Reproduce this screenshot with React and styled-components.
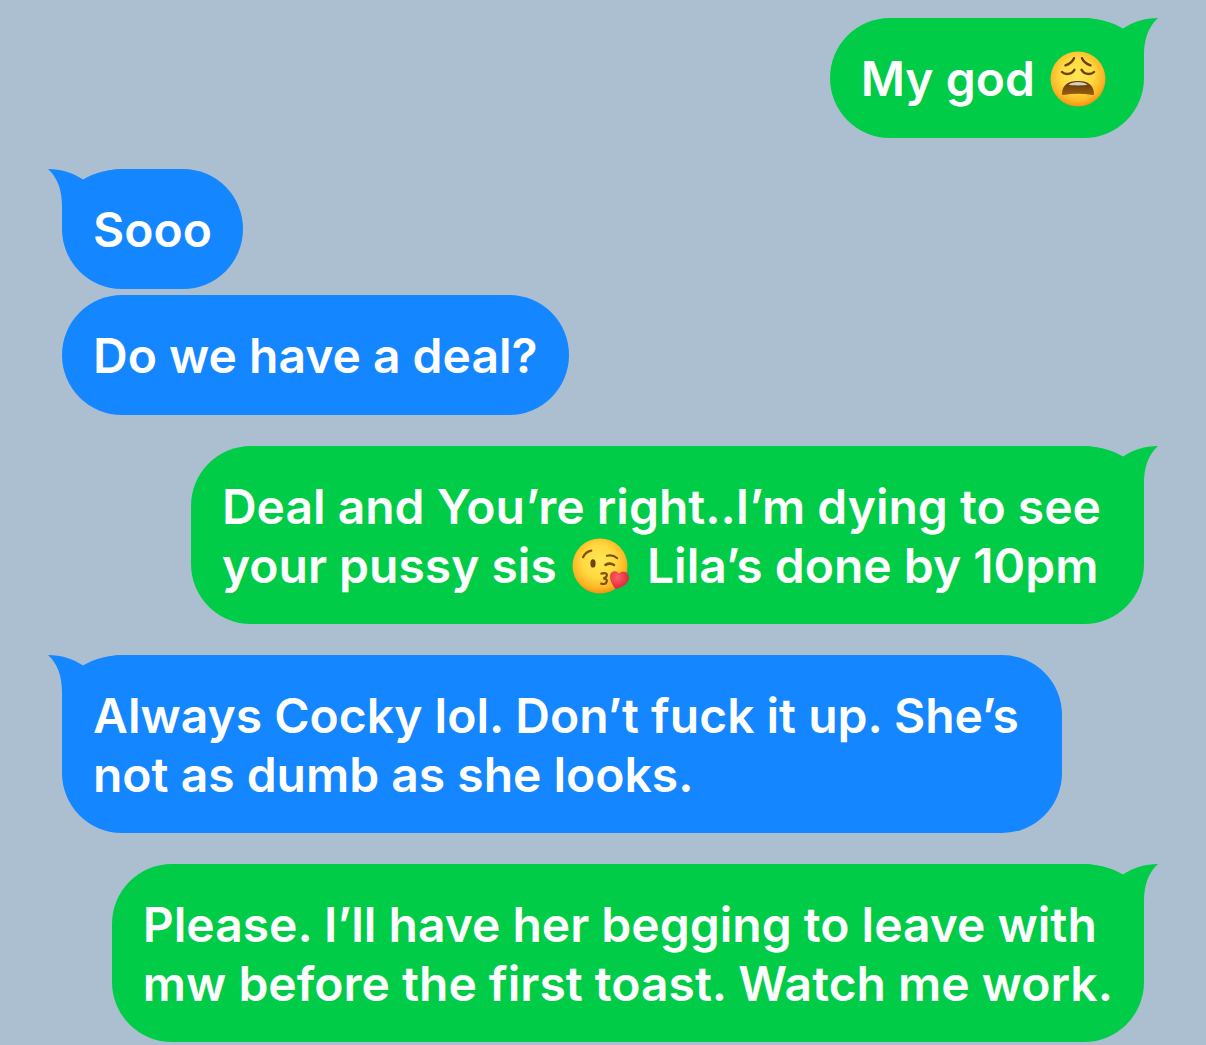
import styled, { createGlobalStyle } from "styled-components";

const GlobalStyle = createGlobalStyle`
  * {
    box-sizing: border-box;
  }

  body {
    margin: 0;
    background-color: #abbfd0;
    font-family: Inter, "Liberation Sans", sans-serif;
  }
`;

const Thread = styled.main`
  display: flex;
  flex-direction: column;
  gap: 31px;
  padding: 18px 62px 3px;
`;

const Group = styled.section`
  display: flex;
  flex-direction: column;
  align-items: ${({ $sent }) => ($sent ? "flex-end" : "flex-start")};
  gap: 6px;
`;

const Bubble = styled.p`
  position: relative;
  max-width: 100%;
  min-height: 120px;
  margin: 0;
  padding: 31px 31px 29px;
  border-radius: 60px;
  background-color: ${({ $sent }) => ($sent ? "#00cc47" : "#1486ff")};
  color: white;
  font-size: 48px;
  font-weight: 600;
  line-height: 59px;
  white-space: break-spaces;
`;

const TailShape = styled.svg`
  position: absolute;
  top: 0;
  width: 80px;
  height: 60px;
  fill: ${({ $sent }) => ($sent ? "#00cc47" : "#1486ff")};
  ${({ $sent }) => ($sent ? "right: -14px;" : "left: -14px; transform: scaleX(-1);")}
`;

// Relative so the wording stays above the tail, which reaches into the corner.
const Line = styled.span`
  display: block;
  position: relative;
`;

const Emoji = styled.svg`
  width: 58px;
  height: 58px;
  margin: 0 6px 0 2px;
  vertical-align: -12px;
`;

const Tail = ({ $sent }) => (
  <TailShape $sent={$sent} viewBox="0 0 80 60" aria-hidden="true">
    <path d="M0 0 C20 0 34 4 45 10.5 C55 4 67 0 80 0 C70 9 66 22 66 37 V60 H0 Z" />
  </TailShape>
);

const WearyFace = () => (
  <Emoji viewBox="0 0 58 58" role="img" aria-label="weary face">
    <defs>
      <radialGradient id="weary" cx="48%" cy="42%" r="60%">
        <stop offset="0" stopColor="#ffe655" />
        <stop offset="0.5" stopColor="#ffd93f" />
        <stop offset="0.8" stopColor="#fdb726" />
        <stop offset="1" stopColor="#f08c10" />
      </radialGradient>
      <linearGradient id="wearyMouth" x1="0" y1="0" x2="0" y2="1">
        <stop offset="0" stopColor="#5c3306" />
        <stop offset="1" stopColor="#9a600f" />
      </linearGradient>
    </defs>
    <circle cx="29" cy="29" r="27.5" fill="url(#weary)" />
    <g fill="none" stroke="#6b3f08" strokeWidth="2.4" strokeLinecap="round">
      <path d="M16.5 15.3 C20.5 14 23.6 11.6 25 8.2" />
      <path d="M33 8.2 C34.4 11.6 37.5 14 41.5 15.3" />
      <path d="M13 22 C16 25 23 24.8 25.5 19.8" />
      <path d="M32.5 19.8 C35 24.8 42 25 45 22" />
    </g>
    <path
      d="M13 43.4 C13.4 35.4 18.5 31 29 31 C39.5 31 44.6 35.4 45 43.4 C45 44.8 44.3 45.2 43.2 44.9 C34 43.4 24 43.4 14.8 44.9 C13.7 45.2 13 44.8 13 43.4 Z"
      fill="url(#wearyMouth)"
    />
    <path
      d="M19.4 34.8 C24 31 34 31 38.6 34.8 C36 35.6 22 35.6 19.4 34.8 Z"
      fill="#d8cdca"
    />
  </Emoji>
);

const KissFace = () => (
  <Emoji viewBox="0 0 58 58" role="img" aria-label="face blowing a kiss">
    <defs>
      <radialGradient id="kiss" cx="48%" cy="42%" r="60%">
        <stop offset="0" stopColor="#ffe655" />
        <stop offset="0.5" stopColor="#ffd93f" />
        <stop offset="0.8" stopColor="#fdb726" />
        <stop offset="1" stopColor="#f08c10" />
      </radialGradient>
      <radialGradient id="kissHeart" cx="38%" cy="35%" r="70%">
        <stop offset="0" stopColor="#ff6064" />
        <stop offset="1" stopColor="#dd2036" />
      </radialGradient>
    </defs>
    <circle cx="29" cy="29" r="27.5" fill="url(#kiss)" />
    <g fill="none" stroke="#80500f" strokeWidth="2.2" strokeLinecap="round">
      <path d="M12 20.3 C13.8 16.4 16.5 14.2 20.3 13.6" />
      <path d="M36 18.8 C39.5 18 43.5 18.8 46.2 21.2" />
      <path d="M34.5 27.9 C37.4 26.3 40.4 26.3 43 28" strokeWidth="2.6" />
      <path d="M30.4 36.6 C33.8 35.4 36.2 36.2 35.8 38.6 C35.4 40.4 33.8 41.2 32.2 41.4 C34.4 41.5 36.1 42.4 35.8 44.2 C35.4 46.6 33 47.6 30.2 46.6" />
    </g>
    <ellipse cx="22" cy="26.4" rx="2.6" ry="4.2" fill="#704207" />
    <path
      d="M44.6 52 C41.4 48 38.8 43.8 39 39.2 C39.2 34 45 32.6 48 36.4 C51.4 33.2 57.6 35 57.9 40.2 C58 45.6 52.4 50.6 44.6 52 Z"
      fill="url(#kissHeart)"
    />
  </Emoji>
);

const Message = ({ sent, tail, children }) => (
  <Bubble $sent={sent}>
    {tail && <Tail $sent={sent} />}
    {children}
  </Bubble>
);

const App = () => {
  return (
    <>
      <GlobalStyle />
      <Thread>
        <Group $sent>
          <Message sent tail>
            <Line>
              My god <WearyFace />
            </Line>
          </Message>
        </Group>

        <Group>
          <Message tail>
            <Line>Sooo</Line>
          </Message>
          <Message>
            <Line>Do we have a deal?</Line>
          </Message>
        </Group>

        <Group $sent>
          <Message sent tail>
            <Line>{"Deal and You’re right..I’m dying to see "}</Line>
            <Line>
              your pussy sis <KissFace /> Lila’s done by 10pm
            </Line>
          </Message>
        </Group>

        <Group>
          <Message tail>
            <Line>{"Always Cocky lol. Don’t fuck it up. She’s "}</Line>
            <Line>not as dumb as she looks.</Line>
          </Message>
        </Group>

        <Group $sent>
          <Message sent tail>
            <Line>{"Please. I’ll have her begging to leave with "}</Line>
            <Line>mw before the first toast. Watch me work.</Line>
          </Message>
        </Group>
      </Thread>
    </>
  );
};

export default App;
